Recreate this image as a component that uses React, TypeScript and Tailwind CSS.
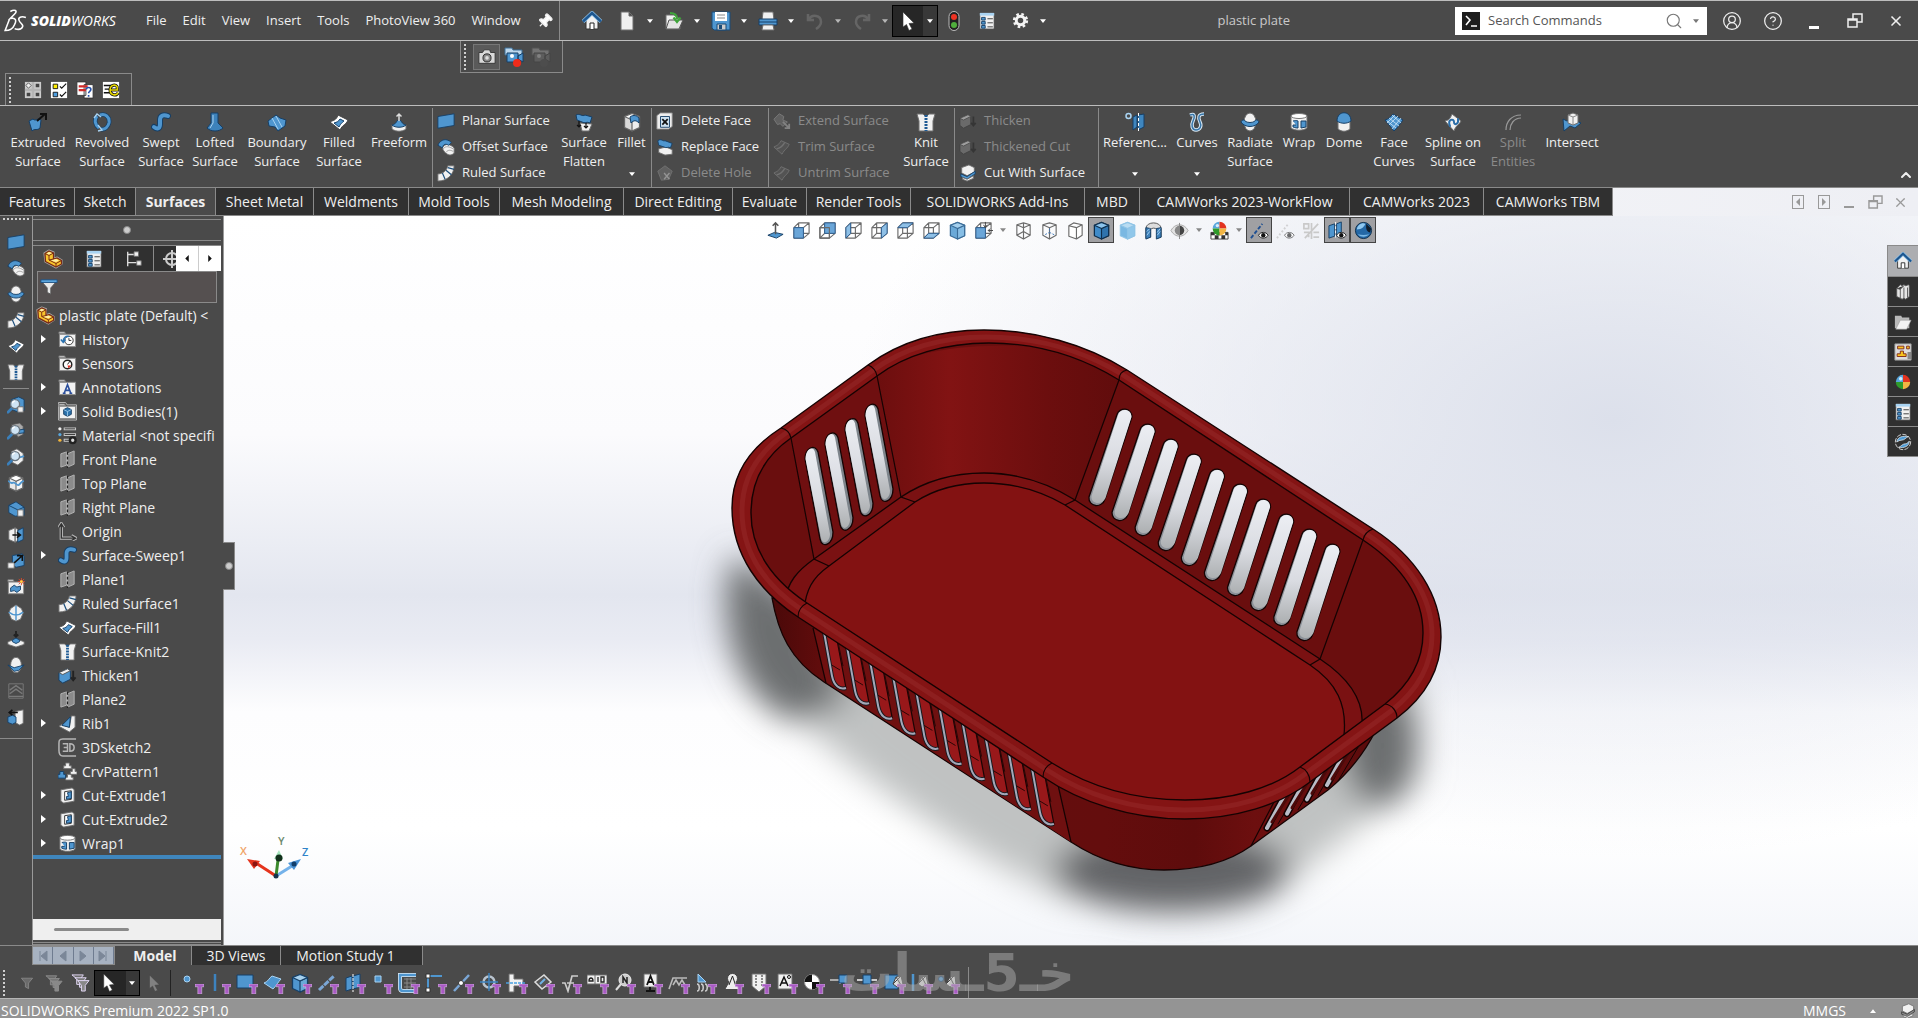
import type { ReactNode } from "react";
import { ChevronUp, CircleHelp, CircleUserRound, Pin, Search, X } from "lucide-react";
import clsx from "clsx";

const B = "#4f96cf";
const L = "#a9d3f2";
const D = "#163f66";
const W = "#f1f1f1";

const blue = { fill: B, stroke: D, strokeLinejoin: "round" as const };
const white = { fill: W, stroke: "#6e6e6e", strokeLinejoin: "round" as const };
const line = { fill: "none", stroke: B, strokeWidth: 2, strokeLinecap: "round" as const };
const wire = { fill: "none", stroke: "#6b6b6b", strokeWidth: 1.2, strokeLinejoin: "round" as const };

const folder = (
  <>
    <path d="M1 4V2h6l1 2z" fill="#ddd" stroke="#777" />
    <rect x="1.5" y="4.5" width="17" height="13" fill={W} stroke="#888" />
  </>
);

const magnifier = (
  <>
    <path d="M6 13l-5 5" stroke="#3a7fba" strokeWidth="3" strokeLinecap="round" />
    <circle cx="9" cy="9" r="5" fill="#cfe4f4" stroke="#6a7680" strokeWidth="1.5" />
    <path d="M6 8a3.5 3.5 0 0 1 3-2.5" stroke="#fff" fill="none" strokeWidth="1.5" />
  </>
);

const wireCube = (
  <path d="M2 7h10v11H2zM7 2h11v11H7zM2 7l5-5M12 7l6-5M12 18l6-5M2 18l5-5" {...wire} />
);

const isoCube = (top: string, left: string, right: string, edge: string) => (
  <>
    <path d="M10 1.5l7.5 3v11L10 19l-7.5-3.5v-11z" fill={left} stroke={edge} strokeWidth="1.3" strokeLinejoin="round" />
    <path d="M10 8l7.5-3.5v11L10 19z" fill={right} stroke={edge} strokeWidth="1.2" strokeLinejoin="round" />
    <path d="M2.5 4.5L10 1.5l7.5 3L10 8z" fill={top} stroke={edge} strokeWidth="1.2" strokeLinejoin="round" />
  </>
);

const eye = (
  <>
    <path d="M9 15c2-4 8-4 10 0-2 4-8 4-10 0z" fill="#fff" stroke="#222" />
    <circle cx="14" cy="15" r="2.3" fill="#111" />
  </>
);

const sphere = (
  <>
    <path d="M10 2a8 8 0 0 0-8 8h8z" fill="#58a6dc" />
    <path d="M10 2a8 8 0 0 1 8 8h-8z" fill="#e2321f" />
    <path d="M2 10a8 8 0 0 0 8 8v-8z" fill="#2f9a2b" />
    <path d="M18 10a8 8 0 0 1-8 8v-8z" fill="#f2b544" />
    <circle cx="7.5" cy="6.5" r="2" fill="#d7ecfa" />
  </>
);

const icons: Record<string, ReactNode> = {
  home: (
    <>
      <path d="M4 9v9h12V9l-6-6z" fill={W} stroke="#333" />
      <path d="M1 10.5L10 2l9 8.5" fill="none" stroke="#8fc0e6" strokeWidth="4" />
      <path d="M1 10.5L10 2l9 8.5" fill="none" stroke="#1d568f" strokeWidth="2.5" />
      <path d="M8 18v-6h4v6" fill="#fff" stroke="#222" />
    </>
  ),
  gear: (
    <>
      <circle cx="10" cy="10" r="7.5" fill="none" stroke="#f4f4f4" strokeWidth="3" strokeDasharray="3 2.9" />
      <circle cx="10" cy="10" r="5" fill="none" stroke="#f4f4f4" strokeWidth="3.5" />
    </>
  ),
  doc: <path d="M4 1h8l4 4v14H4zM12 1v4h4" {...white} />,
  open: (
    <>
      <path d="M2 4h8l6 4v10H2z" {...white} />
      <path d="M5 9h14l-4 9H2z" fill="#e4e4e4" stroke="#555" />
      <path d="M6 2c5 0 7 2 7 6M9.5 6.5L13 11l3.5-4.5" fill="none" stroke="#3fa53a" strokeWidth="2.2" />
    </>
  ),
  save: (
    <>
      <path d="M1 1h18v18H3l-2-2z" fill={B} stroke="#1b4b77" />
      <path d="M4 1h12v9H4z" fill="#fff" />
      <path d="M6 4h8M6 7h8" stroke="#888" />
      <path d="M6 13h9v6H6z" fill="#ccc" stroke="#1b4b77" />
      <path d="M8 14h3v4H8z" fill="#1b4b77" />
    </>
  ),
  print: (
    <>
      <path d="M5 1h10l1 8H4z" {...white} />
      <path d="M1 8h18v6H1z" {...blue} />
      <path d="M1 11h18" stroke={D} />
      <path d="M5 14h10l1 5H4z" {...white} />
    </>
  ),
  undo: <path d="M3 3v6h6M4 8c3-5 12-4 12 3 0 3-2 5-5 7" fill="none" stroke="#777" strokeWidth="2.5" />,
  redo: <path d="M17 3v6h-6M16 8C13 3 4 4 4 11c0 3 2 5 5 7" fill="none" stroke="#777" strokeWidth="2.5" />,
  cursor: <path d="M5 1l11 11-5 .5 3 5.5-3 1.5-2.5-6L5 16z" fill="#fff" stroke="#333" strokeWidth=".6" />,
  traffic: (
    <>
      <rect x="5" y="0.5" width="10" height="19" rx="5" fill="#222" stroke="#bbb" />
      <circle cx="10" cy="6" r="3" fill="#ef3322" />
      <circle cx="10" cy="14" r="3" fill="#4fae3c" />
    </>
  ),
  list: (
    <>
      <path d="M2 1h16v18H2z" fill={W} stroke="#444" />
      <path d="M2 1h16v3H2z" fill={L} />
      <path d="M4 6h4v3H4zM4 10.5h4v3H4zM4 15h4v3H4z" {...blue} />
      <path d="M10.5 7.5h6M10.5 12h6M10.5 16.5h6" stroke="#333" />
    </>
  ),
  camera: (
    <>
      <path d="M1 5h4l2-3h6l1 3h5v12H1z" fill="#d9d9d9" stroke="#333" />
      <circle cx="10" cy="11" r="4.5" fill="#888" stroke="#222" />
      <circle cx="10" cy="11" r="2" fill="#ddd" />
    </>
  ),
  record: (
    <>
      <path d="M1 5V1h7l1 2h9v5H1z" fill="#bcd7ec" stroke="#3c6e97" />
      <path d="M3 6h11v9H3zM14 9l5-3v9l-5-3z" {...blue} />
      <circle cx="8" cy="9" r="2" fill="#fff" />
      <circle cx="13" cy="16" r="4" fill="#ef2b1b" />
    </>
  ),
  macroNodes: (
    <>
      <path d="M1 1h18v18H1z" fill="#ccc" />
      <path d="M10 1v18M1 10h18" stroke="#b5b5b5" strokeWidth="3" />
      <path d="M13 3h4v4h-4zM3 13h4v4H3zM13 13h4v4h-4z" fill="#444" />
      <path d="M5 2l3 3-3 3-3-3z" fill="#eee" stroke="#555" />
    </>
  ),
  macroChecks: (
    <>
      <path d="M1 1h18v18H1z" fill="#fff" />
      <path d="M3.500 3.500h5v5h-5z" fill="#ffee00" stroke="#111" />
      <path d="M3.500 12.500h5v5h-5z" fill="#4d9ee0" stroke="#111" />
      <path d="M11 6l2 2 5-5M11 15l2 2 5-5" fill="none" stroke="#111" strokeWidth="1.3" />
    </>
  ),
  macroHelp: (
    <>
      <path d="M1 1h10v15H1zM9 4h10v15H9z" fill="#fff" stroke="#333" />
      <path d="M3 6h10M3 10h8" stroke="#d12a2a" strokeWidth="2.5" />
      <path d="M11.500 9.500c0-3 5-3 5 0 0 2-2.500 2-2.500 4M14 15.500v2" fill="none" stroke="#2450a8" strokeWidth="1.8" />
    </>
  ),
  macroE: (
    <>
      <path d="M1 1h18v18H1z" fill="#fff" />
      <path d="M2 5h8M3 9h6M2 13h8" stroke="#111" strokeWidth="1.5" />
      <path d="M17 7c-1-4-8-3-8 3s7 7 9 3M9 10h8V7" fill="none" stroke="#111" strokeWidth="3.5" />
      <path d="M17 7c-1-4-8-3-8 3s7 7 9 3M9 10h8V7" fill="none" stroke="#e8d800" strokeWidth="1.8" />
    </>
  ),
  extrude: (
    <>
      <path d="M1 9l4-2c3 3 5-2 8 1l-1 8c-3 3-5 0-8 3z" {...blue} />
      <path d="M9 9l8-7M12 2h6v6" fill="none" stroke="#111" strokeWidth="2" />
    </>
  ),
  revolve: (
    <>
      <path d="M5 4c-3 4-2 9 2 12M8 3c5-2 10 2 9 8-1 4-4 7-8 6" fill="none" stroke={D} strokeWidth="4.5" />
      <path d="M5 4c-3 4-2 9 2 12M8 3c5-2 10 2 9 8-1 4-4 7-8 6" fill="none" stroke={B} strokeWidth="3" />
      <path d="M2 6l3-4 4 3M6 13l4 5-4 1" fill="none" stroke={L} strokeWidth="1.3" />
    </>
  ),
  sweep: (
    <>
      <path d="M3 15c4 3 6 1 6-3V8c0-4 3-6 8-4" fill="none" stroke={D} strokeWidth="6" strokeLinecap="round" />
      <path d="M3 15c4 3 6 1 6-3V8c0-4 3-6 8-4" fill="none" stroke={B} strokeWidth="4" strokeLinecap="round" />
    </>
  ),
  loft: (
    <>
      <path d="M6 1h7v10l5 5c-4 4-12 4-16 0l4-5z" fill="#3d82bb" stroke={D} />
      <path d="M8 3v8l-3 5" stroke={L} fill="none" />
    </>
  ),
  boundary: (
    <>
      <path d="M1 9l8-6 4 3 6 2-1 6-7 5-3-4-6-1z" {...blue} />
      <path d="M5 6l6 11M9 4l6 11" stroke={L} />
    </>
  ),
  fill: (
    <>
      <path d="M1 10c3-2 6-1 8-7l10 5c-2 5-5 4-8 10z" fill="#fff" stroke="#444" />
      <path d="M5 11c3-1 4-1 6-4l4 2c-2 2-3 2-5 6z" {...blue} />
    </>
  ),
  freeform: (
    <>
      <path d="M3 13v4c4 3 10 3 14 0v-4z" {...white} />
      <path d="M3 13c5-1 4-5 7-5s2 4 7 5c-3 3-11 3-14 0z" {...blue} />
      <path d="M10 9V2M7.500 4.500L10 2l2.500 2.500" fill="none" stroke="#ddd" strokeWidth="1.5" />
    </>
  ),
  planar: <path d="M1 5l18-3v13L1 18z" {...blue} />,
  offset: (
    <>
      <path d="M6 11c3-6 9-4 13 0v6c-4 3-6 2-9 0-2-2-3-3-4-6z" {...white} />
      <path d="M7 12c3-4 7-2 11 0M10 16c2-3 5-3 8-1" fill="none" stroke="#999" />
      <path d="M1 8c3-7 10-8 15-3l-3 3C9 6 7 7 6 11z" {...blue} />
    </>
  ),
  ruled: (
    <>
      <path d="M1 11c6 0 10-4 11-9h7c0 10-8 17-18 17z" {...white} />
      <path d="M6 10l3 7M10 7l6 5M12 4l7 2" stroke="#1c4e7c" strokeWidth="1.3" />
    </>
  ),
  flatten: (
    <>
      <path d="M6 11l12 1-3 7H8z" {...white} />
      <path d="M2 3c4-2 6 2 9 0l7 2-2 6c-4-2-5 1-8-1l-5-2z" {...blue} />
      <path d="M5 9v6M3 13l2 2 2-2M12 11v5M10 14l2 2 2-2" fill="none" stroke="#111" strokeWidth="1.2" />
    </>
  ),
  fillet: (
    <>
      {isoCube("#fafafa", "#d9d9d9", "#eee", "#666")}
      <path d="M8 5c4-3 7-1 9 1v5c-3-3-5-3-8 0z" {...blue} />
    </>
  ),
  delFace: (
    <>
      <path d="M1 4l4-3h13v15l-4 3H1z" fill="#eee" stroke="#888" />
      <path d="M5 5h10v12H5z" fill="#cfe3f2" stroke={D} />
      <path d="M7 8l6 6M13 8l-6 6" stroke="#111" strokeWidth="2" />
    </>
  ),
  replFace: (
    <>
      <path d="M3 12l8-2 7 3v5l-8 1-7-3z" {...white} />
      <path d="M2 3c4-3 5 1 8 0l8 3-2 5c-3-2-4 1-7-1L3 8z" {...blue} />
    </>
  ),
  delHole: (
    <>
      <path d="M2 8l8-6 8 6-4 9-8 1z" fill="#777" stroke="#999" />
      <path d="M9 10l6 7M15 10l-6 7" stroke="#ddd" strokeWidth="1.5" />
    </>
  ),
  extend: (
    <>
      <path d="M1 8l6-6 5 3-1 4 5 2-5 5-3-3-3 1z" fill="#777" stroke="#aaa" />
      <path d="M11 11l7 7M18 13v5h-5" fill="none" stroke="#bbb" strokeWidth="2" />
    </>
  ),
  trim: (
    <>
      <path d="M1 10c4-2 5-2 8-7l9 4c-2 5-5 5-8 11z" fill="#5c5c5c" stroke="#999" />
      <path d="M4 12c6-1 7-4 9-7" fill="none" stroke="#999" strokeWidth="1.5" />
    </>
  ),
  knit: (
    <>
      <path d="M1 2h6l3 3 3-3h6l-2 7v10H3V9z" {...white} />
      <path d="M10 3v16" stroke="#1e5a94" strokeWidth="3" strokeDasharray="2 1" />
    </>
  ),
  thicken: (
    <>
      <path d="M1 7l9-4 3 2v9l-8 4-4-3z" {...blue} />
      <path d="M1 7l9-4 3 2-8 4z" fill={W} stroke="#555" />
      <path d="M16 5v9M13.500 12l2.500 3 2.500-3" fill="none" stroke="#222" strokeWidth="2" />
    </>
  ),
  cutSurf: (
    <>
      <path d="M3 4l8-3 6 3v5l-8 4-6-3z" {...white} />
      <path d="M2 11l7 3 9-6v3l-9 6-7-3z" {...blue} />
      <path d="M4 15l5 2 7-4v3l-7 3-5-2z" {...white} />
    </>
  ),
  reference: (
    <>
      <circle cx="3.500" cy="4" r="2.500" fill="none" stroke={L} strokeWidth="1.5" />
      <path d="M8 5l4-2v12l-4 3zM13 3l6-1v13l-6 3z" fill="#3f86bf" stroke={D} />
      <path d="M13.500 1v18" stroke="#fff" strokeDasharray="3 2" />
    </>
  ),
  curves: (
    <>
      <path d="M3 3c5-2 5 2 3 6s-1 9 3 9 6-4 4-8-2-8 4-8" fill="none" stroke="#d9e8f3" strokeWidth="3.5" />
      <path d="M3 3c5-2 5 2 3 6s-1 9 3 9 6-4 4-8-2-8 4-8" fill="none" stroke="#3876a9" strokeWidth="1.5" />
    </>
  ),
  radiate: (
    <>
      <ellipse cx="10" cy="10" rx="6" ry="9" {...white} />
      <path d="M1 10c4 6 14 6 18 0-1-3-4-2-4-1-2 2-8 2-10 0 0-1-3-2-4 1z" {...blue} />
    </>
  ),
  wrap: (
    <>
      <path d="M2 4v12c4 3 12 3 16 0V4z" {...white} />
      <ellipse cx="10" cy="4" rx="8" ry="2.5" fill="#fff" stroke="#777" />
      <path d="M4 9c4-1 5 0 5 0v7c-3 0-5-1-5-1v-2h3M12 9h5v6l-5 1z" {...blue} />
    </>
  ),
  dome: (
    <>
      <path d="M4 9h12v8c-4 3-8 3-12 0z" {...white} />
      <path d="M3 9c0-11 14-11 14 0-4 3-10 3-14 0z" {...blue} />
    </>
  ),
  faceCurves: (
    <>
      <path d="M1 8c4-1 5-3 8-6l10 6c-3 4-5 7-9 11z" {...blue} />
      <path d="M5 6l10 8M3 9l9 7M8 3l9 8M14 4L5 13M17 6l-9 11M11 3L3 11" stroke="#cfe6f7" strokeWidth=".8" />
    </>
  ),
  spline: (
    <>
      <path d="M2 9c4-1 5-2 7-7l9 7c-2 4-5 4-7 10z" {...white} />
      <path d="M7 14c-3-7 4-8 4-4s5 2 4-3" {...line} stroke="#2a6da8" />
    </>
  ),
  split: <path d="M3 18C3 10 8 3 18 3M7 18C7 12 11 6 18 6" fill="none" stroke="#999" strokeWidth="1.2" />,
  intersect: (
    <>
      <path d="M1 7l4 2 5-2 9 4-6 5-5-2-6 5z" {...blue} />
      <path d="M6 3l5-2 5 2v8l-5 2-5-2z" {...white} />
      <path d="M6 3l5 2 5-2M11 5v8" fill="none" stroke="#888" />
    </>
  ),
  zoomBox: (
    <>
      <path d="M5 4l8-3 6 3v12l-6 2-8-3z" {...blue} />
      {magnifier}
      <path d="M12 12h6v6h-6z" {...white} />
    </>
  ),
  zoomGear: (
    <>
      <path d="M5 3l9-2 4 4v9l-6 3z" fill="#aaa" stroke="#555" />
      <path d="M12 9l7-1v4l-7 1z" {...blue} />
      {magnifier}
    </>
  ),
  zoomRound: (
    <>
      <path d="M5 4l6-3 7 5v8l-6 5-6-3z" {...white} />
      <path d="M12 11l7-2" stroke={B} strokeWidth="2" />
      {magnifier}
    </>
  ),
  splitBox: (
    <>
      {isoCube("#fff", "#e8e8e8", "#f4f4f4", "#666")}
      <path d="M2 8c4 5 4-1 8 3s4-2 8-3" {...line} />
    </>
  ),
  wedge: (
    <>
      <path d="M2 6l8-4 9 6v9l-10 1-7-4z" {...blue} />
      <path d="M2 6l10 5 7-3M12 11v7" fill="none" stroke={D} />
      <path d="M12 11h6v7h-6z" {...white} />
    </>
  ),
  moveFace: (
    <>
      <path d="M2 5l7-3v16l-7-3zM9 2l3 2v12l-3 2z" {...white} />
      <path d="M12 5l6-3v13l-6 3z" {...blue} />
      <path d="M6 10h8M11 7l4 3-4 3" fill="none" stroke="#111" strokeWidth="1.6" />
    </>
  ),
  scale: (
    <>
      <path d="M6 4l11-2 2 3v10l-9 2-4-3z" {...blue} />
      <path d="M1 12h7v6H1z" {...white} />
      <path d="M8 12l8-7M11 4h6v6" fill="none" stroke="#111" strokeWidth="1.8" />
    </>
  ),
  folderStar: (
    <>
      {folder}
      <path d="M4 11l4-3 3 2 4-1v4l-4 3-3-2-4 1z" {...blue} />
      <path d="M16 0v8M12 4h8M13 1l6 6M19 1l-6 6" stroke="#d94a2b" />
      <circle cx="16" cy="4" r="1.5" fill="#ffd94a" />
    </>
  ),
  orb: (
    <>
      <path d="M10 1l6 4 2 5-3 7-5 2-5-2-3-7 2-5z" {...white} />
      <path d="M2 9c5 4 11 4 16 0M10 2v16" fill="none" stroke={B} strokeWidth="1.6" />
    </>
  ),
  press: (
    <>
      <path d="M1 13l9-3 9 3v3l-9 3-9-3z" {...white} />
      <path d="M6 11l4-2 4 2v2l-4 2-4-2z" {...blue} />
      <path d="M10 1v6M7.500 5L10 7.500 12.500 5" fill="none" stroke="#222" strokeWidth="2" />
    </>
  ),
  orbPlane: (
    <>
      <ellipse cx="10" cy="10" rx="6" ry="8.5" {...white} />
      <path d="M1 10l7 3 11-3-6 6-5 1z" {...blue} />
    </>
  ),
  offPanel: (
    <>
      <path d="M2 2h16v16H2z" fill="none" stroke="#7a7a7a" />
      <path d="M3 9l7-5 7 5M3 13l7-5 7 5M2 16h16" stroke="#7a7a7a" fill="none" strokeWidth="1.5" />
    </>
  ),
  exportPart: (
    <>
      <path d="M9 4l9-2v15l-4 2-5-3z" {...white} />
      <path d="M1 10l5-2 4 2v6l-4 2-5-2z" {...blue} />
      <path d="M12 5H3M6 2L2.500 5 6 8" fill="none" stroke="#111" strokeWidth="1.8" />
    </>
  ),
  part: (
    <>
      <path d="M1 4l5-3 5 2v6l3-1 5 3v4l-6 4L2 13z" fill="#f8cb3c" stroke="#fff" strokeWidth="1.2" strokeLinejoin="round" opacity=".5" />
      <path d="M2 4.500L6 2l4.500 2v6l3.500-1 4.500 2.500V15L13 18 2.500 12.500z" fill="#f8c52c" stroke="#7a2b16" strokeWidth="1.3" strokeLinejoin="round" />
      <path d="M2 4.500l4 2L10.500 4M6 6.500V11l7 3.500 5.500-3M13 14.500V18M6 11l4.500-1" fill="none" stroke="#7a2b16" />
      <path d="M3.500 4.500L6 3l3 1-3 1.500zM8 11.500l5-1.500 3 1.500-3 1.500z" fill="#fff0a8" />
    </>
  ),
  tree: (
    <>
      <path d="M3 2v16M3 5h7M3 14h11" stroke="#ddd" strokeWidth="1.5" fill="none" />
      <path d="M10 2h5v5h-5zM13 12h5v5h-5z" {...white} />
    </>
  ),
  target: <path d="M10 1v18M1 10h18M10 4a6 6 0 1 0 0 12 6 6 0 0 0 0-12z" fill="none" stroke="#ccc" strokeWidth="2" />,
  filter: (
    <>
      <path d="M1 3h18l-7 8v7l-4-2v-5z" fill="#e8e8e8" stroke="#555" />
      <path d="M1 2h18v3H1z" fill="#5aa4dc" stroke="#1d5183" />
    </>
  ),
  history: (
    <>
      {folder}
      <circle cx="11.500" cy="11" r="4.500" fill="#fff" stroke="#333" />
      <path d="M11.500 8.500V11h2.500" stroke="#333" fill="none" />
      <path d="M3 10l2.500 3L8 10M5.500 12c0-4 3-6 6-5" fill="none" stroke="#2a72b0" strokeWidth="1.6" />
    </>
  ),
  sensors: (
    <>
      {folder}
      <circle cx="10" cy="11" r="4.500" fill="#fff" stroke="#222" strokeWidth="1.5" />
      <path d="M10 11l3-4" stroke="#222" />
      <path d="M10 12h4l-3 3z" fill="#e02b20" />
    </>
  ),
  annotations: (
    <>
      {folder}
      <path d="M5 16h3M12 16h3M6.500 16L10 7l3.500 9M8 13h4" fill="none" stroke="#2b4f9c" strokeWidth="1.7" />
    </>
  ),
  bodies: (
    <>
      <path d="M.5 5V.5H8L9.500 3h10v16h-19z" fill="none" stroke="#bbb" />
      {folder}
      <path d="M10 6l4 2v5l-4 2-4-2V8z" fill="#2c73ad" stroke={D} />
      <path d="M6 8l4 2 4-2M10 10v5" stroke={L} fill="none" strokeWidth=".8" />
    </>
  ),
  material: (
    <>
      <circle cx="2" cy="3" r="1.7" fill="#eee" />
      <circle cx="2" cy="9" r="1.7" fill="#58a6dc" />
      <circle cx="2" cy="15" r="1.7" fill="#f2b53b" />
      <path d="M6 3h13M6 9h13M6 15h6" stroke="#ccc" strokeWidth="3" />
      <path d="M7 3h11M7 9h11M7 15h5" stroke="#333" strokeWidth="1" />
      <circle cx="15.500" cy="15" r="3" fill="#ddd" stroke="#222" strokeWidth="2.5" />
    </>
  ),
  plane: (
    <>
      <path d="M3 4l6-2v14l-6 2zM10 4l7-3v14l-7 3z" fill="#8b8b8b" stroke="#b5b5b5" />
      <path d="M10 2v17" stroke="#222" strokeDasharray="3 2" strokeWidth="1.3" />
    </>
  ),
  origin: (
    <>
      <path d="M3.500 3v14H17M1 6l2.500-4L6 6M14 14.500l4.500 2.500-4.500 2.500" fill="none" stroke="#b9b9b9" strokeWidth="3.5" />
      <path d="M3.500 3v14H17M1 6l2.500-4L6 6M14 14.500l4.500 2.500-4.500 2.500" fill="none" stroke="#333" strokeWidth="1.5" />
    </>
  ),
  rib: (
    <>
      <path d="M1 13l3-2 8 3 2-12h4v12l-6 5z" {...white} />
      <path d="M4 12l9-9-1 11z" {...blue} />
    </>
  ),
  sketch3d: (
    <>
      <path d="M19 1H5C1 1 1 3 1 6v7c0 4 1 6 4 6h14" fill="none" stroke="#b5b5b5" strokeWidth="1.6" />
      <path d="M5 6h5v8H5M6 10h4M12.500 6v8c6 0 6-8 0-8z" fill="none" stroke="#b5b5b5" strokeWidth="1.6" />
    </>
  ),
  pattern: (
    <>
      <path d="M8 1h4v3h2v3H6V4h2zM15 7h3v3h2v3h-7v-3h2zM10 13h4v3h2v3H8v-3h2z" {...white} />
      <path d="M2 10h4v3h2v4H0v-4h2z" {...blue} />
    </>
  ),
  cutExtrude: (
    <>
      <path d="M3 4l12-2 2 2v12l-11 2-3-2z" {...white} />
      <path d="M7 6l7-1v9l-7 1z" fill="#fff" stroke="#333" />
      <path d="M10 7l4-1v7l-5 1v-3h2z" {...blue} />
    </>
  ),
  normalTo: (
    <>
      <path d="M2 15l7-3 9 2-7 4z" {...blue} />
      <path d="M10 14V2M7 5l3-3 3 3" fill="none" stroke="#555" strokeWidth="1.6" />
    </>
  ),
  viewFront: (<>{wireCube}<path d="M2 7h10v11H2z" fill="#6ba6d8" stroke="#2d5f92" /></>),
  viewBack: (<>{wireCube}<path d="M7 2h11v11H7z" fill="#6ba6d8" stroke="#2d5f92" /><path d="M2 7h10v11H2z" {...wire} /></>),
  viewLeft: (<>{wireCube}<path d="M2 7l5-5v11l-5 5z" fill="#8fc0e6" stroke="#2d5f92" /></>),
  viewRight: (<>{wireCube}<path d="M12 7l6-5v11l-6 5z" fill="#8fc0e6" stroke="#2d5f92" /></>),
  viewTop: (<>{wireCube}<path d="M2 7l5-5h11l-6 5z" fill="#8fc0e6" stroke="#2d5f92" /></>),
  viewBottom: (<>{wireCube}<path d="M2 18l5-5h11l-6 5z" fill="#8fc0e6" stroke="#2d5f92" /></>),
  iso: isoCube("#a5d0ee", "#6aa9d8", "#87bee5", "#3a6c98"),
  viewSelect: (
    <>
      {wireCube}
      <path d="M2 7h10v11H2z" fill="#6ba6d8" stroke="#2d5f92" />
      <path d="M12 1v6M15 10h5M10 4l2 3 2-3M17 8l-2 2 2 2" stroke="#444" fill="none" />
    </>
  ),
  wireframe: <path d="M3 4l7-2 7 2v11l-7 4-7-4zM3 4l7 3 7-3M10 7v12M10 2v9M3 15l7-4 7 4" {...wire} />,
  hiddenVis: (<><path d="M3 4l7-2 7 2v11l-7 4-7-4zM3 4l7 3 7-3M10 7v12" {...wire} /><path d="M10 8v4l-6 3M10 12l6 3" stroke="#3a74b5" strokeDasharray="2 1.5" fill="none" /></>),
  hiddenRem: <path d="M3 5l5-3 9 2v11l-6 4-8-3zM3 5l8 2 6-3M11 7v12" {...wire} fill="#fff" />,
  shadedEdge: isoCube("#8cc4ec", "#3f8bc9", "#2f73ad", "#0f2f4d"),
  shaded: isoCube("#b9dcf2", "#7ab8e2", "#90c7ea", "#8fc4e6"),
  section: (
    <>
      <path d="M2 8c0-8 16-8 16 0v9l-4 1V9c-2-2-6-2-7 0v8l-5 1z" fill="#ddd" stroke="#555" />
      <path d="M2 7l5 1v9l-5 2zM13 8l5-1v10l-5 2z" fill="#3f82bb" stroke={D} />
      <path d="M3 15l3-4M3 11l3-3M14 15l3-4M14 12l3-4" stroke={L} />
    </>
  ),
  hideShow: (
    <>
      <path d="M1 10c4-8 14-8 18 0-4 8-14 8-18 0z" fill="#e3e3e3" stroke="#aaa" />
      <path d="M10 5a5 5 0 0 0 0 10z" fill="#888" />
      <path d="M10 5a5 5 0 0 1 0 10z" fill="#444" />
      <path d="M10 2v17" stroke="#888" />
    </>
  ),
  appearance: (
    <>
      <path d="M1 12h18v7H1z" fill="#fff" stroke="#444" />
      <path d="M1 12h4v3H1zM9 12h3v3H9zM16 12h3v3h-3zM5 15h4v4H5zM12 15h4v4h-4z" fill="#333" />
      <g transform="translate(1 -1) scale(.9)">{sphere}</g>
    </>
  ),
  axisEye: (<><path d="M1 18L13 3" stroke="#1f4f92" strokeWidth="2" strokeDasharray="4 2" />{eye}</>),
  axisEyeOff: (<><path d="M1 18L13 3" stroke="#bbb" strokeWidth="2" strokeDasharray="2 2" />{eye}</>),
  sketchOff: <path d="M2 3h5v5H2zM3 18L17 3M10 2v17M12 12h6M12 17h6M2 12h5v5" fill="none" stroke="#c9c9c9" strokeWidth="1.8" />,
  planeEye: (<><path d="M1 5l6-2v13l-6 2zM9 3l5-2v13l-5 2z" {...blue} /><path d="M8 1v18" stroke="#fff" strokeDasharray="3 1.5" />{eye}</>),
  realView: (
    <>
      <circle cx="10" cy="10" r="8.5" fill="#2468a6" stroke="#0d2c49" />
      <path d="M3 9c0-5 6-8 9-6-1 3-4 6-9 6z" fill="#8fc8f0" />
      <path d="M13 3l5 5-1 4c-3 0-5-3-4-9z" fill="#111d2b" />
      <path d="M4 14c4 4 9 3 12 0-4 1-8 1-12 0z" fill="#7ab8e6" />
    </>
  ),
  library: <path d="M3 6l4-4 2 1 2-1 2 1 3-1 1 1v12l-4 3-2-1-2 1-2-1-4-2zM7 6v12M11 5v13M15 5v11M3 6l4 1 4-4" fill="#e5e5e5" stroke="#555" />,
  folderOpen: (
    <>
      <path d="M1 3h7l1 2h8v12H1z" fill="#b9b9b9" />
      <path d="M7 8h12l-5 10H2z" fill="#f2f2f2" stroke="#999" strokeWidth=".6" />
    </>
  ),
  palette: (
    <>
      <path d="M1 1h18v18H1z" fill="#ddd" stroke="#999" />
      <path d="M4 3.500h7v3H4zM14 3.500h3v3h-3zM3.500 15h10v-3h-3V9H7v3H3.500z" fill="#f8c41d" stroke="#7d2415" />
      <path d="M15 10h4v8h-4z" fill="#888" />
    </>
  ),
  sphere,
  swoosh: (
    <>
      <circle cx="10" cy="10" r="8.5" fill="none" stroke="#ddd" strokeDasharray="5 1.5" />
      <path d="M3 10C4 4 10 3 16 4c-3 1-4 4-8 4-2 0-3 1-5 2zM17 9c0 6-6 8-12 7 3-1 4-4 8-4 2 0 3-2 4-3z" fill="#4e9bd5" stroke="#eee" strokeWidth=".8" />
    </>
  ),
  funnel: <path d="M3 4h14l-5 6v7l-4-2v-5z" fill="#6b6b6b" stroke="#8c8c8c" />,
  funnels: (
    <>
      <path d="M1 2h12l-3 4v6H6V6z" fill="#6b6b6b" stroke="currentColor" />
      <path d="M4 5h12l-3 4v6H9V9z" fill="#777" stroke="currentColor" />
      <path d="M7 8h12l-4 5v6h-4v-6z" fill="#888" stroke="currentColor" />
    </>
  ),
  fVertex: <circle cx="5" cy="6" r="3" {...blue} stroke={L} />,
  fEdge: <path d="M6 1v17" stroke="#3d83bf" strokeWidth="2.5" />,
  fFace: <path d="M1 2h16v13H1z" {...blue} />,
  fSurf: <path d="M1 10c4-1 5-5 8-7l9 3c-3 3-4 6-8 10z" {...blue} stroke={L} />,
  fSolid: isoCube("#a5d0ee", "#4f96cf", "#6aa9d8", D),
  fAxis: <path d="M2 17L17 3" stroke="#7ba7d6" strokeWidth="3" strokeDasharray="6 1" />,
  fPlane: (<><path d="M2 5l6-2v13l-6 2zM9 3l7-2v13l-7 2z" {...blue} /><path d="M9 1v18" stroke="#fff" strokeDasharray="3 1" /></>),
  fPoint: <path d="M4 3h6v6H4z" {...blue} stroke={L} />,
  fSketch: (<><path d="M6 6h12M6 10h12M6 14h12M9 5v12M13 5v12" stroke="#888" /><path d="M18 2H2v13c0 2 1 3 3 3h12" fill="none" stroke="#dde8f2" strokeWidth="4" /><path d="M18 2H2v13c0 2 1 3 3 3h12" fill="none" stroke={B} strokeWidth="2.5" /></>),
  fCorner: (<><path d="M3 18V3h14" fill="none" stroke={B} strokeWidth="2" /><path d="M1 1h4v4H1zM1 15h4v4H1z" fill="#fff" stroke="#333" /></>),
  fMid: (<><path d="M2 18L17 2" stroke="#7ba7d6" strokeWidth="2.5" /><circle cx="9" cy="10" r="2.5" fill="#fff" stroke="#333" /></>),
  fCenter: (<><circle cx="10" cy="9" r="5.5" fill="none" stroke="#b9c4cf" strokeWidth="2.5" /><path d="M10 0v18M1 9h18" stroke="#3d83bf" strokeWidth="1.5" /></>),
  fCenterline: (<><path d="M3 1h5v5h9v7H8v6H3z" {...white} /><path d="M0 10h20" stroke="#4aa0e0" strokeDasharray="3 1" strokeWidth="1.5" /></>),
  fDim: (<><path d="M2 9l9-7 7 7-9 7z" fill="#555" stroke="#ddd" strokeWidth="1.5" /><path d="M7 11l5-5" stroke="#6fb1e6" strokeWidth="2" /></>),
  fFinish: <path d="M2 10h3l3 8 4-15h6M7 10h7" fill="none" stroke="#ccc" strokeWidth="1.7" />,
  fGtol: (<><path d="M0 2h20v9H0zM8 2v9" {...white} /><path d="M2 8c0-4 4-4 4 0zM11 4v5M14 9V4h3v5z" fill="none" stroke="#222" strokeWidth="1.3" /></>),
  fNote: (<><circle cx="11" cy="7" r="6" fill="#ccc" stroke="#eee" /><path d="M2 17l5-6" stroke="#ddd" strokeWidth="2" /><path d="M9 10V4l4 6V4" fill="none" stroke="#222" strokeWidth="1.5" /></>),
  fDatum: (<><path d="M3 1h13v13H3z" {...white} /><path d="M6 12l3.500-9L13 12M7.500 9h4" fill="none" stroke="#111" strokeWidth="1.8" /><path d="M9 14v3M5 18h9" stroke="#111" strokeWidth="2" /></>),
  fWeld: <path d="M1 16L5 5h14M5 12l3-5 3 5 3-5 3 5" fill="none" stroke="#bbb" strokeWidth="1.6" />,
  fBead: (<><path d="M3 1v8h8z" {...blue} stroke={L} /><path d="M2 11c3 0 3 7 0 7M6 11c3 0 3 7 0 7M10 11c3 0 3 7 0 7" fill="none" stroke="#ccc" strokeWidth="1.5" /></>),
  fBalloon: (<><path d="M3 16l4-7a5 5 0 1 1 7 0l3 7" fill="#eee" stroke="#444" /><path d="M7 12l3.500-9 3 9" fill="none" stroke="#222" /></>),
  fCosmetic: (<><path d="M3 1h14v12l-7 6-7-6z" {...white} /><path d="M7 2v12M13 2v12" stroke="#222" strokeDasharray="2 1" /></>),
  fTarget: (<><path d="M2 1h14v15H2z" {...white} /><path d="M4 13L8 4l4 9M5.500 10h5" fill="none" stroke="#111" strokeWidth="1.5" /><circle cx="13" cy="4" r="1.500" fill="none" stroke="#111" /></>),
  fCog: (<><circle cx="9" cy="9" r="7.5" fill="#fff" stroke="#999" /><path d="M9 1.500A7.500 7.500 0 0 0 1.500 9H9zM9 9v7.500A7.500 7.500 0 0 0 16.500 9z" fill="#111" /></>),
  fConnect: (<><path d="M0 7h10M10 2v9" stroke="#ccc" strokeWidth="1.5" /><path d="M9 2h8v8H9z" {...blue} /></>),
  fRoute: (<><path d="M0 7h20" stroke="#ccc" strokeWidth="2" /><path d="M6 2h8v9H6z" {...blue} /></>),
  fMeshFace: (<><path d="M1 2h13v14H1z" {...blue} /><path d="M9 11l3-7 5-1 2 8-6 3zM9 11l8-8M12 4l5 8" fill="#ddd" stroke="#444" /></>),
  fMeshEdge: (<><path d="M2 1v17" stroke={B} strokeWidth="2.5" /><path d="M7 11l4-7 4-1 2 8-6 3zM7 11l8-8M11 4l4 8" fill="#ddd" stroke="#444" /></>),
  fMeshPoint: (<><circle cx="3" cy="6" r="2.5" {...blue} /><path d="M8 11l4-7 5-1 1 8-6 3zM8 11l8-8M12 4l4 8" fill="#ddd" stroke="#444" /></>),
};

interface IconProps {
  name: string;
  className?: string;
}

function Icon({ name, className = "size-5" }: IconProps) {
  return (
    <svg viewBox="0 0 20 20" className={clsx("shrink-0", className)} fill="none" aria-hidden="true">
      {icons[name]}
    </svg>
  );
}

function Caret({ className = "text-white" }: { className?: string }) {
  return (
    <svg viewBox="0 0 8 5" className={clsx("h-[4px] w-[6px] shrink-0", className)} aria-hidden="true">
      <path d="M0 0h8L4 5z" fill="currentColor" />
    </svg>
  );
}

function Grip({ className }: { className: string }) {
  return <span className={clsx("border-dotted border-[#cfcfcf]", className)} />;
}

const menus = ["File", "Edit", "View", "Insert", "Tools", "PhotoView 360", "Window"];

const quickTools = [
  { icon: "doc", label: "New" },
  { icon: "open", label: "Open" },
  { icon: "save", label: "Save" },
  { icon: "print", label: "Print" },
  { icon: "undo", label: "Undo", off: true },
  { icon: "redo", label: "Redo", off: true },
];

function Logo() {
  return (
    <div className="flex w-[138px] shrink-0 items-center gap-1 pl-1 text-white">
      <svg viewBox="0 0 26 30" className="h-[26px] w-[23px]" fill="none" stroke="currentColor" strokeWidth="1.8" aria-hidden="true">
        <path d="M7 4c5-3 9-1 5 3l-5 5c5-1 8 1 5 7-2 5-6 7-11 7l5-13" />
        <path d="M25 11c-6-2-9 0-8 3 1 4 6 5 4 8-1 3-5 3-9 2" />
      </svg>
      <span className="text-[14px] leading-5 font-extrabold italic">
        SOLID<span className="font-normal">WORKS</span>
      </span>
    </div>
  );
}

function TitleBar() {
  return (
    <header className="flex h-[41px] items-center border-t border-b border-[#bdbdbd]">
      <Logo />
      <nav className="flex h-full shrink-0 items-center border-r border-[#8a8a8a]">
        {menus.map((m) => (
          <button key={m} className="px-2 text-[13px]">{m}</button>
        ))}
        <button aria-label="Keep menu visible" className="pr-[6px] pl-2">
          <Pin className="size-4 rotate-45 fill-white" />
        </button>
      </nav>
      <div className="flex h-full shrink-0 items-center pl-[22px]">
        <button aria-label="Home" className="flex w-5"><Icon name="home" /></button>
        {quickTools.map((t) => (
          <div key={t.icon} className={clsx("flex w-[47px] items-center justify-end gap-[10px]", t.off && "opacity-60")}>
            <button aria-label={t.label}><Icon name={t.icon} /></button>
            <button aria-label={`${t.label} options`} className="mr-[-4px]"><Caret /></button>
          </div>
        ))}
        <div className="ml-2 flex h-8 w-[46px] items-center border border-black bg-[#262626]">
          <button aria-label="Select" className="flex w-[32px] justify-center"><Icon name="cursor" /></button>
          <button aria-label="Select options" className="flex h-full w-[14px] items-center justify-center bg-[#383838]"><Caret /></button>
        </div>
        <button aria-label="Rebuild" className="flex w-[33px] justify-center"><Icon name="traffic" /></button>
        <button aria-label="File properties" className="flex w-[33px] justify-center"><Icon name="list" className="size-[18px]" /></button>
        <button aria-label="Options" className="flex w-[33px] justify-center"><Icon name="gear" className="size-[17px]" /></button>
        <button aria-label="More options" className="flex w-3 justify-center"><Caret /></button>
      </div>
      <h1 className="ml-auto shrink-0 pr-[165px] text-[13px] text-[#c9c9c9]">plastic plate</h1>
      <label className="flex h-7 w-[252px] shrink-0 items-center bg-white pr-2 pl-[7px] text-[#555]">
        <svg viewBox="0 0 18 18" className="size-[18px] shrink-0 bg-[#1d1d1d]" fill="none" stroke="#fff" strokeWidth="1.6" aria-hidden="true">
          <path d="M4 4l4 4-4 5M9 14h6" />
        </svg>
        <input aria-label="Search Commands" placeholder="Search Commands" className="w-full min-w-0 bg-transparent pl-2 text-[13px] text-[#444] outline-none placeholder:text-[#555]" />
        <Search className="mr-[10px] size-[18px] shrink-0 text-[#777]" strokeWidth={1.5} />
        <Caret className="text-[#777]" />
      </label>
      <div className="flex shrink-0 items-center pr-[2px] pl-1">
        <button aria-label="Account" className="flex w-[41px] justify-center"><CircleUserRound className="size-5" strokeWidth={1.5} /></button>
        <button aria-label="Help" className="flex w-[41px] justify-center"><CircleHelp className="size-5" strokeWidth={1.5} /></button>
        <button aria-label="Minimize" className="flex h-4 w-[41px] items-end justify-center"><span className="h-[3px] w-[10px] bg-white" /></button>
        <button aria-label="Restore" className="flex w-[41px] justify-center"><Restore className="h-[15px] w-[16px]" /></button>
        <button aria-label="Close" className="flex w-[41px] justify-center"><X className="size-4" strokeWidth={2.5} /></button>
      </div>
    </header>
  );
}

function Restore({ className }: { className: string }) {
  return (
    <svg viewBox="0 0 16 15" className={className} fill="none" stroke="currentColor" strokeWidth="1.5" aria-hidden="true">
      <path d="M6 6V1h9v8h-5M1 6h9v8H1zM1 7h9" />
    </svg>
  );
}

function FloatingBars() {
  return (
    <div className="h-[64px]">
      <div className="ml-[460px] flex h-8 w-[103px] items-center border border-t-0 border-[#8a8a8a] pl-[3px]">
        <Grip className="mr-[7px] h-[26px] border-l-2" />
        <button aria-label="Image capture" className="flex h-[26px] w-[27px] items-center justify-center border border-[#777] bg-[#5a5a5a]"><Icon name="camera" className="size-[18px]" /></button>
        <button aria-label="Record video" className="flex w-[27px] justify-center"><Icon name="record" /></button>
        <button aria-label="Stop record" disabled className="flex w-[27px] justify-center opacity-30 grayscale"><Icon name="record" /></button>
      </div>
      <div className="ml-[5px] flex h-8 w-[127px] items-center border border-b-0 border-[#8a8a8a] pl-[3px]">
        <Grip className="mr-[9px] h-[26px] border-l-2" />
        {["macroNodes", "macroChecks", "macroHelp", "macroE"].map((m) => (
          <button key={m} aria-label={m} className="flex w-[26px] justify-center"><Icon name={m} className="size-[18px]" /></button>
        ))}
      </div>
    </div>
  );
}

interface BigProps {
  icon: string;
  label: string;
  width: string;
  more?: boolean;
  off?: boolean;
}

function BigTool({ icon, label, width, more, off }: BigProps) {
  return (
    <button disabled={off} className={clsx("flex h-full shrink-0 flex-col items-center pt-1 text-[13px] leading-[19px]", width, off && "text-[#8b8b8b]")}>
      <Icon name={icon} />
      <span className="mt-px max-w-full">{label}</span>
      {more && <span className="mt-auto mb-[11px]"><Caret /></span>}
    </button>
  );
}

interface SmallItem {
  icon: string;
  label: string;
  off?: boolean;
}

function SmallTools({ items, width }: { items: SmallItem[]; width: string }) {
  return (
    <div className={clsx("flex shrink-0 flex-col border-l border-[#8a8a8a] pl-1", width)}>
      {items.map((it) => (
        <button key={it.label} disabled={it.off} className={clsx("flex h-[26px] items-center gap-[7px] text-[13px] whitespace-nowrap", it.off && "text-[#8b8b8b]")}>
          <Icon name={it.icon} className={it.off ? "size-[18px] opacity-50 grayscale" : "size-[18px]"} />
          {it.label}
        </button>
      ))}
    </div>
  );
}

function Ribbon() {
  return (
    <div className="flex h-[82px] border-t border-[#bdbdbd] pt-[2px] pl-[6px]">
      <BigTool icon="extrude" label="Extruded Surface" width="w-[64px]" />
      <BigTool icon="revolve" label="Revolved Surface" width="w-[64px]" />
      <BigTool icon="sweep" label="Swept Surface" width="w-[54px]" />
      <BigTool icon="loft" label="Lofted Surface" width="w-[54px]" />
      <BigTool icon="boundary" label="Boundary Surface" width="w-[70px]" />
      <BigTool icon="fill" label="Filled Surface" width="w-[54px]" />
      <BigTool icon="freeform" label="Freeform" width="w-[66px]" />
      <SmallTools
        width="w-[124px]"
        items={[
          { icon: "planar", label: "Planar Surface" },
          { icon: "offset", label: "Offset Surface" },
          { icon: "ruled", label: "Ruled Surface" },
        ]}
      />
      <BigTool icon="flatten" label="Surface Flatten" width="w-[56px]" />
      <BigTool icon="fillet" label="Fillet" width="w-[39px]" more />
      <SmallTools
        width="w-[117px]"
        items={[
          { icon: "delFace", label: "Delete Face" },
          { icon: "replFace", label: "Replace Face" },
          { icon: "delHole", label: "Delete Hole", off: true },
        ]}
      />
      <SmallTools
        width="w-[130px]"
        items={[
          { icon: "extend", label: "Extend Surface", off: true },
          { icon: "trim", label: "Trim Surface", off: true },
          { icon: "trim", label: "Untrim Surface", off: true },
        ]}
      />
      <BigTool icon="knit" label="Knit Surface" width="w-[56px]" />
      <SmallTools
        width="w-[144px]"
        items={[
          { icon: "thicken", label: "Thicken", off: true },
          { icon: "thicken", label: "Thickened Cut", off: true },
          { icon: "cutSurf", label: "Cut With Surface" },
        ]}
      />
      <div className="flex h-full border-l border-[#8a8a8a]">
        <BigTool icon="reference" label="Referenc..." width="w-[72px]" more />
        <BigTool icon="curves" label="Curves" width="w-[52px]" more />
        <BigTool icon="radiate" label="Radiate Surface" width="w-[54px]" />
        <BigTool icon="wrap" label="Wrap" width="w-[44px]" />
        <BigTool icon="dome" label="Dome" width="w-[46px]" />
        <BigTool icon="faceCurves" label="Face Curves" width="w-[54px]" />
        <BigTool icon="spline" label="Spline on Surface" width="w-[64px]" />
        <BigTool icon="split" label="Split Entities" width="w-[56px]" off />
        <BigTool icon="intersect" label="Intersect" width="w-[62px]" />
      </div>
      <button aria-label="Collapse ribbon" className="mt-auto mr-1 mb-1 ml-auto"><ChevronUp className="size-4" strokeWidth={3} /></button>
    </div>
  );
}

const tabs = [
  { label: "Features", width: "w-[75px]" },
  { label: "Sketch", width: "w-[61px]" },
  { label: "Surfaces", width: "w-[80px]" },
  { label: "Sheet Metal", width: "w-[98px]" },
  { label: "Weldments", width: "w-[95px]" },
  { label: "Mold Tools", width: "w-[91px]" },
  { label: "Mesh Modeling", width: "w-[124px]" },
  { label: "Direct Editing", width: "w-[109px]" },
  { label: "Evaluate", width: "w-[74px]" },
  { label: "Render Tools", width: "w-[104px]" },
  { label: "SOLIDWORKS Add-Ins", width: "w-[174px]" },
  { label: "MBD", width: "w-[55px]" },
  { label: "CAMWorks 2023-WorkFlow", width: "w-[210px]" },
  { label: "CAMWorks 2023", width: "w-[134px]" },
  { label: "CAMWorks TBM", width: "w-[129px]" },
];

function TabStrip() {
  return (
    <div className="flex h-[29px] border-t border-[#8a8a8a] bg-linear-to-r from-white to-[#eeeff4]">
      {tabs.map((t) => (
        <button
          key={t.label}
          className={clsx(
            "shrink-0 border-r border-b border-[#8a8a8a] text-[14px] whitespace-nowrap",
            t.width,
            t.label === "Surfaces" ? "bg-[#4a4a4a] font-bold" : "bg-[#303030]",
          )}
        >
          {t.label}
        </button>
      ))}
      <div className="ml-auto flex items-center gap-[10px] pr-[10px] text-[#999]">
        <button aria-label="Previous pane" className="flex h-[14px] w-3 items-center justify-center border border-[#999]">
          <svg viewBox="0 0 4 8" className="h-[8px] w-1"><path d="M4 0v8L0 4z" fill="#999" /></svg>
        </button>
        <button aria-label="Next pane" className="ml-1 flex h-[14px] w-3 items-center justify-center border border-[#999]">
          <svg viewBox="0 0 4 8" className="h-[8px] w-1"><path d="M0 0v8l4-4z" fill="#999" /></svg>
        </button>
        <button aria-label="Minimize document" className="ml-1 flex h-3 w-[10px] items-end"><span className="h-[2px] w-full bg-[#999]" /></button>
        <button aria-label="Restore document" className="ml-1"><Restore className="h-[14px] w-[15px]" /></button>
        <button aria-label="Close document"><X className="size-[15px]" /></button>
      </div>
    </div>
  );
}

const sideTools = ["planar", "offset", "radiate", "ruled", "fill", "knit"];
const sideTools2 = [
  "zoomBox", "zoomGear", "zoomRound", "splitBox", "wedge", "moveFace", "scale",
  "folderStar", "orb", "press", "orbPlane", "offPanel", "exportPart",
];

function SideBar() {
  return (
    <aside className="flex w-8 shrink-0 flex-col items-center">
      <Grip className="mt-[2px] mb-[9px] w-[26px] border-t-2" />
      {sideTools.map((n) => (
        <button key={n} aria-label={n} className="flex h-[26px] items-center"><Icon name={n} className="size-[18px]" /></button>
      ))}
      <hr className="mt-[3px] mb-[3px] w-[26px] border-[#8a8a8a]" />
      {sideTools2.map((n) => (
        <button key={n} aria-label={n} className="flex h-[26px] items-center"><Icon name={n} className="size-[18px]" /></button>
      ))}
      <hr className="mt-2 w-full border-[#8a8a8a]" />
    </aside>
  );
}

const treeItems = [
  { icon: "history", label: "History", open: true },
  { icon: "sensors", label: "Sensors" },
  { icon: "annotations", label: "Annotations", open: true },
  { icon: "bodies", label: "Solid Bodies(1)", open: true },
  { icon: "material", label: "Material <not specifi" },
  { icon: "plane", label: "Front Plane" },
  { icon: "plane", label: "Top Plane" },
  { icon: "plane", label: "Right Plane" },
  { icon: "origin", label: "Origin" },
  { icon: "sweep", label: "Surface-Sweep1", open: true },
  { icon: "plane", label: "Plane1" },
  { icon: "ruled", label: "Ruled Surface1" },
  { icon: "fill", label: "Surface-Fill1" },
  { icon: "knit", label: "Surface-Knit2" },
  { icon: "thicken", label: "Thicken1" },
  { icon: "plane", label: "Plane2" },
  { icon: "rib", label: "Rib1", open: true },
  { icon: "sketch3d", label: "3DSketch2" },
  { icon: "pattern", label: "CrvPattern1" },
  { icon: "cutExtrude", label: "Cut-Extrude1", open: true },
  { icon: "cutExtrude", label: "Cut-Extrude2", open: true },
  { icon: "wrap", label: "Wrap1", open: true },
];

function FeatureTree() {
  return (
    <section className="relative w-[192px] shrink-0 border-r border-l border-[#9a9a9a] pr-[2px]">
      <div className="flex h-full flex-col overflow-hidden">
        <div className="mt-[3px] flex h-[22px] items-center justify-center border-y border-[#8a8a8a]">
          <span className="size-2 rounded-full border border-[#888] bg-[#ccc]" />
        </div>
        <div className="mt-1 flex h-[26px] border-t border-[#8a8a8a]">
          <button aria-label="Feature tree" className="flex w-10 items-center justify-center"><Icon name="part" /></button>
          <button aria-label="Property manager" className="flex w-10 items-center justify-center border-l border-[#8a8a8a] bg-[#303030]"><Icon name="list" className="size-[18px]" /></button>
          <button aria-label="Configurations" className="flex w-10 items-center justify-center border-l border-[#8a8a8a] bg-[#303030]"><Icon name="tree" className="size-[18px]" /></button>
          <button aria-label="Dimensions" className="flex w-[23px] items-center overflow-hidden border-l border-[#8a8a8a] bg-[#303030] pl-2"><Icon name="target" /></button>
          <button aria-label="Scroll tabs left" className="flex flex-1 items-center justify-center border-r border-[#ccc] bg-white">
            <svg viewBox="0 0 4 8" className="h-[7px] w-1"><path d="M4 0v8L0 4z" fill="#111" /></svg>
          </button>
          <button aria-label="Scroll tabs right" className="flex flex-1 items-center justify-center bg-white">
            <svg viewBox="0 0 4 8" className="h-[7px] w-1"><path d="M0 0v8l4-4z" fill="#111" /></svg>
          </button>
        </div>
        <label className="mx-1 flex h-8 shrink-0 items-center border border-[#8a8a8a] bg-[#555050] pl-[2px]">
          <Icon name="filter" className="size-[18px]" />
          <input aria-label="Filter tree" className="w-full min-w-0 bg-transparent px-2 text-[13px] outline-none" />
        </label>
        <ul className="text-[14px] whitespace-nowrap">
          <li className="flex h-6 items-center gap-[4px] pl-[3px]">
            <Icon name="part" className="size-[19px]" />
            plastic plate (Default) &lt;
          </li>
          {treeItems.map((it) => (
            <li key={it.label} className="flex h-6 items-center">
              <span className="flex w-[25px] shrink-0 pl-2">
                {it.open && (
                  <button aria-label={`Expand ${it.label}`}>
                    <svg viewBox="0 0 5 8" className="h-2 w-[5px]"><path d="M0 0v8l5-4z" fill="#fff" /></svg>
                  </button>
                )}
              </span>
              <Icon name={it.icon} className="mr-[5px] size-[19px]" />
              {it.label}
            </li>
          ))}
        </ul>
        <div className="h-1 shrink-0 bg-[#3f86bd]" />
        <div className="mt-auto flex h-[21px] shrink-0 items-center bg-[#efefef] pl-[21px]">
          <div className="h-[3px] w-[75px] rounded-full bg-[#8a8a8a]" />
        </div>
        <div className="mt-[2px] h-[3px] shrink-0 border-y border-[#8a8a8a]" />
      </div>
      <button aria-label="Collapse panel" className="absolute top-[326px] left-full z-10 flex h-12 w-3 items-center justify-center border border-l-0 border-[#8a8a8a] bg-[#4a4a4a]">
        <span className="size-2 rounded-full border border-[#888] bg-[#ccc]" />
      </button>
    </section>
  );
}

const viewTools = [
  "normalTo", "viewFront", "viewBack", "viewLeft", "viewRight", "viewTop", "viewBottom", "iso", "viewSelect", "|",
  "wireframe", "hiddenVis", "hiddenRem", "shadedEdge", "shaded", "section", "hideShow", "|", "appearance", "|",
  "axisEye", "axisEyeOff", "sketchOff", "planeEye", "realView",
];
const pressed = ["shadedEdge", "axisEye", "planeEye", "realView"];

function ViewToolbar() {
  return (
    <div className="relative flex h-7 items-center justify-center pr-[4px]">
      {viewTools.map((n, i) =>
        n === "|" ? (
          <button key={i} aria-label="More views" className="flex w-[14px] justify-center"><Caret className="text-[#888]" /></button>
        ) : (
          <button
            key={n}
            aria-label={n}
            className={clsx("flex h-[26px] w-[26px] items-center justify-center", pressed.includes(n) && "border border-[#444] bg-[#a0a0a3]", n === "axisEyeOff" && "opacity-60")}
          >
            <Icon name={n} className="size-[19px]" />
          </button>
        ),
      )}
    </div>
  );
}

const outerRim =
  "M868 365C898 343 938 330 984 330C1035 330 1085 344 1127 370L1373 529C1415 556 1441 595 1441 637C1441 668 1426 696 1397 718L1310 782C1280 805 1235 819 1185 819C1130 819 1080 802 1043 777L798 617C760 592 732 555 732 508C732 475 748 449 781 428Z";
const innerRim =
  "M877 376C905 355 945 343 989 343C1035 343 1080 356 1119 380L1363 540C1402 566 1423 597 1423 633C1423 661 1409 685 1385 704L1300 767C1272 789 1230 800 1185 800C1135 800 1090 787 1052 763L807 603C770 578 751 548 751 513C751 482 765 456 791 438Z";
const midRim =
  "M872 371C902 349 941 337 986 337C1035 337 1083 350 1123 375L1368 535C1408 561 1432 596 1432 635C1432 665 1418 690 1391 711L1305 774C1276 797 1232 810 1185 810C1133 810 1085 795 1047 770L802 610C765 585 742 552 742 511C742 478 757 453 786 433Z";
const body =
  "M772 598C778 632 790 660 824 682L1071 842C1100 861 1130 870 1164 870C1200 870 1230 861 1251 846L1328 790C1350 772 1366 750 1376 730L1200 600Z";

function Basket() {
  const ten = Array.from({ length: 10 }, (_, i) => i);
  return (
    <svg viewBox="224 216 1694 729" preserveAspectRatio="xMidYMid slice" className="absolute inset-0 h-full w-full" aria-hidden="true">
      <defs>
        <filter id="soft" x="-20%" y="-20%" width="140%" height="140%"><feGaussianBlur stdDeviation="16" /></filter>
        <linearGradient id="corner" x1="0" x2="1" y1="0" y2="0">
          <stop offset="0" stopColor="#6c0e0e" />
          <stop offset=".3" stopColor="#821313" />
          <stop offset=".7" stopColor="#6c0e0e" />
          <stop offset="1" stopColor="#610c0c" />
        </linearGradient>
        <linearGradient id="side" gradientUnits="userSpaceOnUse" x1="772" x2="1376" y1="0" y2="0">
          <stop offset="0" stopColor="#4a0909" />
          <stop offset=".1" stopColor="#660d0d" />
          <stop offset=".55" stopColor="#640d0d" />
          <stop offset=".7" stopColor="#5e0c0c" />
          <stop offset=".8" stopColor="#6d0f0f" />
          <stop offset="1" stopColor="#5a0b0b" />
        </linearGradient>
        <linearGradient id="hole" x1="0" x2="0" y1="0" y2="1">
          <stop offset="0" stopColor="#eceef3" />
          <stop offset=".55" stopColor="#d9dbe1" />
          <stop offset="1" stopColor="#adb0b2" />
        </linearGradient>
        <clipPath id="inside"><path d={innerRim} /></clipPath>
      </defs>

      <g filter="url(#soft)">
        <path d="M740 640C750 710 1010 890 1080 900L1290 880L1420 780V680L850 620Z" fill="#c0c2c2" />
        <path d="M733 555C715 610 730 700 795 722L850 700L800 600Z" fill="#6c6e70" />
        <ellipse cx="1172" cy="870" rx="118" ry="42" fill="#626466" />
        <ellipse cx="1380" cy="745" rx="38" ry="62" fill="#6c6e70" />
      </g>

      <path d={body} fill="url(#side)" stroke="#150303" strokeWidth="1.3" />
      <path d="M813 628L826 682L1071 842L1058 785Z" fill="#6f1010" />
      <path d="M813 628L826 683M1058 785L1071 842M1275 800L1251 846" stroke="#150303" strokeWidth="1.2" />
      {ten.map((i) => (
        <g key={i} transform={`translate(${i * 23.1} ${i * 15.1})`} fill="none">
          <path d="M824 632L832 676C834 686 840 690 846 688L837 640Z" fill="#98181a" stroke="#1c0404" strokeWidth="1.2" />
          <path d="M830 664l10 6M838 642l5 24" stroke="#2a0606" />
          <path d="M824 632L832 676C834 686 840 690 846 688" stroke="#1a1a1f" strokeWidth="4" />
          <path d="M824 632L832 676C834 686 840 690 846 688" stroke="#a3a7b8" strokeWidth="2" />
        </g>
      ))}
      {[0, 1, 2, 3].map((i) => (
        <g key={i} transform={`translate(${i * 20} ${i * -14.3})`} strokeLinecap="round">
          <path d="M1293 780L1267 828" stroke="#150303" strokeWidth="7" />
          <path d="M1293 780L1267 828" stroke="#b9bcc6" strokeWidth="4" />
          <path d="M1298 780L1272 822" stroke="#4a0a0a" strokeWidth="3" />
          <path d="M1304 780L1278 824" stroke="#150303" strokeWidth="1" />
        </g>
      ))}

      <path d={outerRim} fill="#841414" stroke="#150303" strokeWidth="1.4" />
      <path d={midRim} fill="none" stroke="#8d1f1f" strokeWidth="5" />
      <path d={innerRim} fill="#6a0e0e" />

      <g clipPath="url(#inside)">
        <path d="M877 376C905 340 1080 330 1119 380L1075 500L984 540L901 497Z" fill="url(#corner)" />
        <path d="M791 438L877 376L901 497L814 559Z" fill="#6f0f10" />
        <path d="M1119 380L1363 540L1320 659L1075 500Z" fill="#6a0e0e" />
        <path
          d="M901 497C925 481 953 473 984 473C1018 473 1048 483 1075 500L1320 659C1350 679 1364 700 1362 725L1300 820H1000L785 600C788 582 797 571 814 559Z"
          fill="#7a1112"
          stroke="#150303"
          strokeWidth="1.3"
        />
        <path
          d="M915 502C935 489 958 483 984 483C1013 483 1041 491 1065 505L1310 665C1337 683 1347 705 1344 735L1300 820H1000L804 610C806 590 812 578 829 566Z"
          fill="#831212"
          stroke="#150303"
          strokeWidth="1.3"
        />
        <path
          d="M877 376L901 497L915 502M1119 380L1075 500L1065 505M791 438L814 559L829 566M1363 540L1320 659L1310 665"
          fill="none"
          stroke="#150303"
          strokeWidth="1.2"
        />
        {ten.map((i) => (
          <g key={i} transform={`translate(${i * 23.1} ${i * 15})`}>
            <path d="M1117 414.5C1119 407 1132 407 1132 417L1105 499C1102 509 1088 507 1089 497Z" fill="#8b9198" stroke="#150303" strokeWidth="1.3" />
            <path d="M1118 415C1120 408 1131.5 408 1131.5 417L1105.500 498C1102 506 1090.500 504 1091.500 496Z" fill="url(#hole)" />
          </g>
        ))}
        {[0, 1, 2, 3].map((i) => (
          <g key={i} transform={`translate(${i * 20} ${i * -14.4})`}>
            <path d="M805 459C805 448 815 443 818 452L833 532C833 545 822 549 820 539Z" fill="#7d848b" stroke="#150303" strokeWidth="1.3" />
            <path d="M805.5 459C805.5 449 813 445 815 452L830 534C830 542 822.5 546 821 538Z" fill="url(#hole)" />
          </g>
        ))}
      </g>
      <path d={innerRim} fill="none" stroke="#150303" strokeWidth="1.4" />
      <path
        d="M868 365C873 367 876 371 877 376M1127 370C1122 371 1119 375 1119 380M781 428C786 429 790 433 791 438M1373 529C1367 531 1364 535 1363 540M807 603C801 606 798 611 798 617M1052 763C1046 766 1043 771 1043 777M1300 767C1306 769 1310 775 1310 782M1385 704C1392 705 1397 711 1397 718"
        fill="none"
        stroke="#150303"
        strokeWidth="1.2"
      />

      <g transform="translate(1 0)">
        <path d="M275 876L255 863" stroke="#e5341d" strokeWidth="3" />
        <path d="M246 859l13 2-6 8z" fill="#e5341d" />
        <circle cx="254" cy="864" r="2.5" fill="#8c1410" />
        <path d="M275 876L291 866" stroke="#74b2ea" strokeWidth="3" />
        <path d="M300 859l-13 4 6 7z" fill="#4a93d6" />
        <circle cx="293" cy="864" r="2.5" fill="#123e6b" />
        <path d="M275 876L277 860" stroke="#3b8a2d" strokeWidth="3" />
        <path d="M278 850l-5 9h9z" fill="#a5e6bd" />
        <circle cx="278" cy="858" r="3.5" fill="#12301c" />
        <circle cx="275" cy="876" r="2.5" fill="#16334d" />
        <g fontFamily="Open Sans, sans-serif" fontSize="11" fontWeight="600">
          <text x="239" y="855" fill="#f0a468">X</text>
          <text x="277" y="845" fill="#6d8a6d">Y</text>
          <text x="301" y="856" fill="#2f83c9">Z</text>
        </g>
      </g>
    </svg>
  );
}

const taskPane = ["home", "library", "folderOpen", "palette", "sphere", "list", "swoosh"];

function Viewport() {
  return (
    <main className="relative min-w-0 flex-1 bg-[radial-gradient(ellipse_45%_60%_at_82%_28%,#dce0ebff,#dce0eb00),linear-gradient(to_bottom,#ffffff_0%,#fbfbfd_30%,#e3e6ef_52%,#e9ebf3_58%,#fdfdfe_68%,#ffffff_84%,#f4f6fa_100%)]">
      <Basket />
      <ViewToolbar />
      <nav className="absolute top-[29px] right-0 w-[31px] border border-r-0 border-[#8a8a8a]">
        {taskPane.map((n, i) => (
          <button key={n} aria-label={n} className={clsx("flex h-[30px] w-full items-center justify-center", i === 0 ? "bg-[#adaeb1]" : "border-t border-[#8a8a8a] bg-[#303030]")}>
            <Icon name={n} className="size-[18px]" />
          </button>
        ))}
      </nav>
    </main>
  );
}

const navPaths = [
  { label: "First tab", d: "M3 1v10M10 1v10L4 6z" },
  { label: "Previous tab", d: "M9 1v10L3 6z" },
  { label: "Next tab", d: "M3 1v10l6-5z" },
  { label: "Last tab", d: "M9 1v10M2 1v10l6-5z" },
];

function BottomTabs() {
  return (
    <div className="flex h-[20px] border-t border-[#8a8a8a] pl-8">
      <div className="flex w-[83px] border border-[#8a8a8a]">
        {navPaths.map((p) => (
          <button key={p.label} aria-label={p.label} className="flex flex-1 items-center justify-center border-r border-[#6f7c90] bg-[#a7b2c1]">
            <svg viewBox="0 0 12 12" className="size-3"><path d={p.d} fill="#7b8798" stroke="#7b8798" /></svg>
          </button>
        ))}
      </div>
      <button className="w-[76px] pl-1 text-[14px] leading-[18px] font-bold">Model</button>
      <button className="w-[89px] border-l border-[#8a8a8a] bg-[#303030] text-[14px] leading-[18px]">3D Views</button>
      <button className="w-[143px] border-x border-[#8a8a8a] bg-[#303030] pr-3 text-[14px] leading-[18px]">Motion Study 1</button>
    </div>
  );
}

const filterTools = [
  "fVertex", "fEdge", "fFace", "fSurf", "fSolid", "fAxis", "fPlane", "fPoint", "fSketch", "fCorner",
  "fMid", "fCenter", "fCenterline", "fDim", "fFinish", "fGtol", "fNote", "fDatum", "fWeld", "fBead",
  "fBalloon", "fCosmetic", "fTarget", "fCog", "fConnect", "fRoute", "fMeshFace", "fMeshEdge", "fMeshPoint",
];

function FilterBar() {
  return (
    <div className="relative flex h-[33px] items-center pt-[2px] pl-[3px]">
      <Grip className="mr-2 h-[26px] border-l-2" />
      <button aria-label="Filter" className="flex w-[27px] justify-center"><Icon name="funnel" className="size-4" /></button>
      <button aria-label="Clear filters" className="flex w-[27px] justify-center text-[#8c8c8c]"><Icon name="funnels" className="size-[18px]" /></button>
      <button aria-label="All filters" className="flex w-[27px] justify-center text-[#e3d8f5]"><Icon name="funnels" className="size-[19px]" /></button>
      <div className="flex h-[26px] w-[46px] items-center border border-black bg-[#262626]">
        <button aria-label="Select" className="flex w-[32px] justify-center pr-1"><Icon name="cursor" className="size-[19px]" /></button>
        <button aria-label="Select mode" className="flex h-full w-[14px] items-center justify-center bg-[#383838]"><Caret /></button>
      </div>
      <button aria-label="Clear selection" className="flex w-[27px] justify-center opacity-30"><Icon name="cursor" className="size-[18px]" /></button>
      <span className="mr-[7px] ml-[3px] h-[26px] border-l border-[#222]" />
      {filterTools.map((n) => (
        <button key={n} aria-label={n} className="relative flex h-[26px] w-[27px] shrink-0 items-center justify-center">
          <Icon name={n} className="size-[20px]" />
          <svg viewBox="0 0 8 9" className="absolute right-[1px] bottom-[2px] h-[10px] w-[9px]" aria-hidden="true">
            <path d="M0 0h8v2.5H6V9H2.500V2.500H0z" fill="#a95bc4" stroke="#e0c9ea" strokeWidth=".5" />
          </svg>
        </button>
      ))}
      <span className="ml-[7px] h-full border-l border-[#8a8a8a]" />
      <div dir="rtl" className="pointer-events-none absolute bottom-[-5px] left-[838px] w-[240px] text-center font-['DejaVu_Sans'] text-[52px] leading-[60px] font-bold text-[#ababab]/50">
        خـ5ـسات
      </div>
    </div>
  );
}

function StatusBar() {
  return (
    <footer className="flex h-5 items-center border-t border-[#b5b5b5] bg-[#949494] pt-1 pl-px text-[14px] leading-4 text-white">
      <span>SOLIDWORKS Premium 2022 SP1.0</span>
      <span className="mr-[24px] ml-auto">MMGS</span>
      <button aria-label="Units" className="mr-[24px] rotate-180"><Caret /></button>
      <Icon name="cutSurf" className="mr-[2px] size-[16px] grayscale" />
    </footer>
  );
}

export default function App() {
  return (
    <div className="flex min-h-screen flex-col overflow-hidden bg-[#4a4a4a] font-['Open_Sans','Noto_Sans','DejaVu_Sans',sans-serif] text-[#efefef]">
      <TitleBar />
      <FloatingBars />
      <Ribbon />
      <TabStrip />
      <div className="flex flex-1">
        <SideBar />
        <FeatureTree />
        <Viewport />
      </div>
      <BottomTabs />
      <FilterBar />
      <StatusBar />
    </div>
  );
}
